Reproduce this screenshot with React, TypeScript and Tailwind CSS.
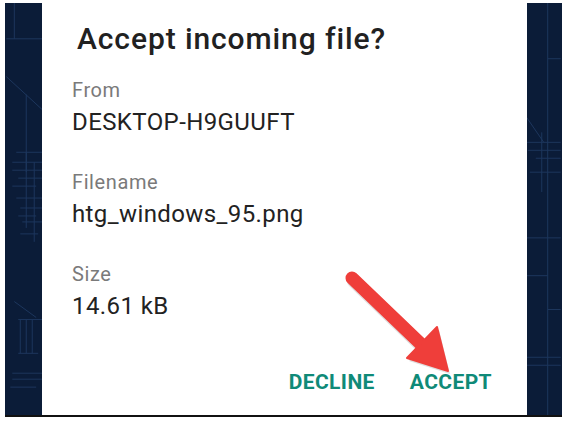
import React from 'react';

const font = { fontFamily: 'Roboto, "Noto Sans", sans-serif' };

const Field: React.FC<{ label: string; value: string; first?: boolean }> = ({ label, value, first }) => (
  <div className={first ? 'mt-[21px]' : 'mt-[33px]'}>
    <div className="text-[20px] leading-[24px] tracking-[0.6px] text-[#7a7a7a]">{label}</div>
    <div className="mt-[5px] text-[24px] leading-[30px] tracking-[0.4px] text-[#222222]">{value}</div>
  </div>
);

const Blueprint: React.FC = () => (
  <svg className="absolute inset-0 h-full w-full" viewBox="0 0 557 414" fill="none" stroke="#23406a" strokeWidth="1" opacity="0.75">
    {/* left strip */}
    <path d="M8 0V36M0 36H37M0 74L37 108M20 92V170" />
    <path d="M10 150H37M6 160H37M6 168H37M12 176H37M6 184H30M10 196H37M14 206H37M12 214H30M20 150V226M28 160V240M16 220H37M14 232H32" />
    <path d="M8 300L30 316M12 318H37M14 318V352M20 318V352M26 318V352M12 352H32M6 372H37M6 378H37M4 386H30" />
    {/* right strip */}
    <path d="M544 0V414M544 56H557M518 108L540 140M522 140H557M524 148H557M532 156H557M526 170H557M538 130V190M522 236H557M488 274H544M544 308H557M492 356H557M492 364H557" />
  </svg>
);

const Arrow: React.FC = () => (
  <svg className="pointer-events-none absolute left-0 top-0" width="567" height="422" viewBox="0 0 567 422">
    <g transform="translate(2 3)" fill="#000" opacity="0.12">
      <path d="M352 278L424 347" stroke="#000" strokeWidth="14" strokeLinecap="round" />
      <path d="M407 358L437 327L448 371Z" />
    </g>
    <path d="M352 278L424 347" stroke="#ef3e3a" strokeWidth="13" strokeLinecap="round" />
    <path d="M407 358L437 327L448 371Z" fill="#ef3e3a" stroke="#ef3e3a" strokeWidth="2" strokeLinejoin="round" />
  </svg>
);

export default function App() {
  return (
    <div className="relative h-[422px] w-[567px] bg-white" style={font}>
      <div className="ml-[5px] pt-[3px]">
        <div className="relative flex h-[414px] w-[557px] border-b-2 border-[#111] bg-[#0b1c38]">
          <Blueprint />
          <div className="relative ml-[37px] flex w-[485px] flex-col bg-white pl-[30px] pr-[35px]">
            <h1 className="mt-[18px] pl-[5px] text-[30px] font-medium leading-[36px] tracking-[0.9px] text-[#212121]">Accept incoming file?</h1>
            <Field first label="From" value="DESKTOP-H9GUUFT" />
            <Field label="Filename" value="htg_windows_95.png" />
            <Field label="Size" value="14.61 kB" />
            <div className="mt-[49px] flex justify-end gap-[35px] text-[21px] font-bold leading-[24px] text-[#0f8a78]">
              <button className="tracking-[0.4px]">DECLINE</button>
              <button className="tracking-[0.4px]">ACCEPT</button>
            </div>
          </div>
        </div>
      </div>
      <Arrow />
    </div>
  );
}
